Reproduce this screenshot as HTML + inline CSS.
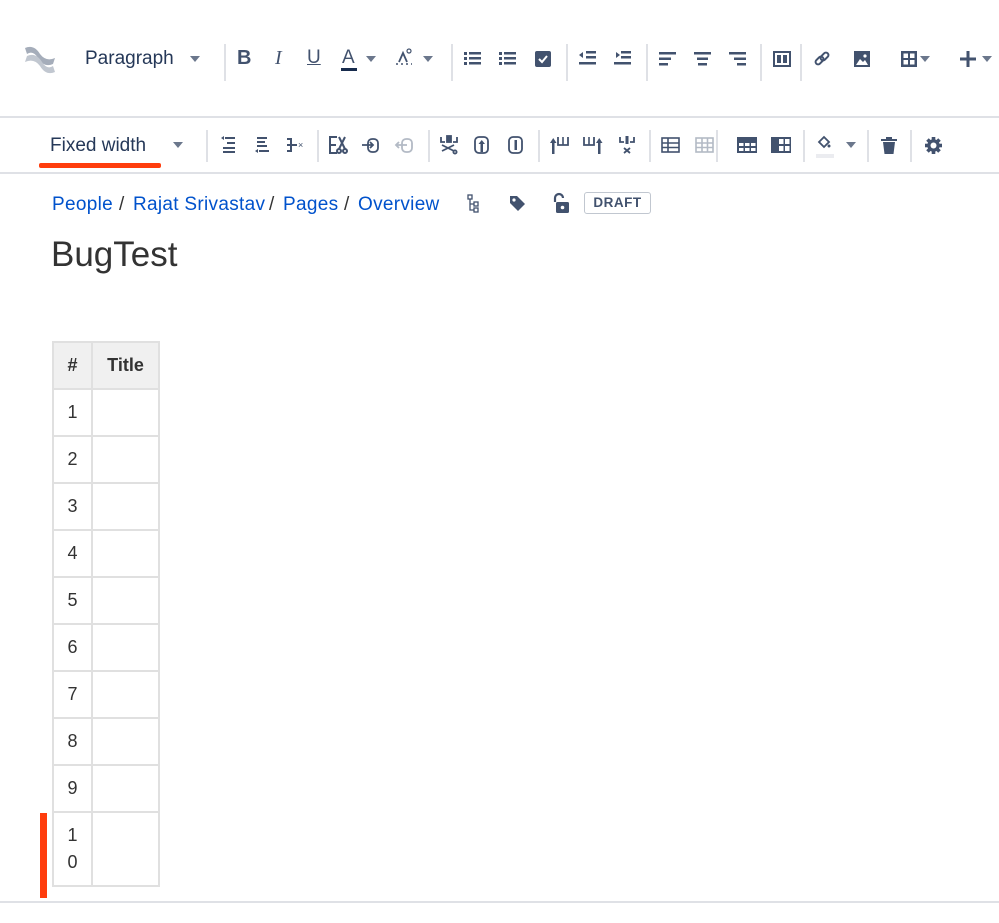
<!DOCTYPE html>
<html><head><meta charset="utf-8"><style>
*{margin:0;padding:0;box-sizing:border-box}
body{width:999px;height:923px;background:#fff;font-family:"Liberation Sans",Arial,sans-serif;position:relative;overflow:hidden;color:#172b4d}
.a{position:absolute}
.sep{position:absolute;width:2px;background:#dfe1e6}
.hl{position:absolute;left:0;width:999px;height:2px;background:#dfe1e6}
svg{position:absolute;overflow:visible}
.caret{position:absolute;width:0;height:0;border-left:5px solid transparent;border-right:5px solid transparent;border-top:6px solid #6b778c}
.bc{position:absolute;top:194px;font-size:19px;color:#0052cc;white-space:nowrap}
.sl{position:absolute;top:194px;font-size:19px;color:#333}
table{position:absolute;left:52px;top:341px;border-collapse:collapse;font-size:18px;color:#333}
td,th{border:2px solid #e0e0e0;text-align:center;vertical-align:middle}
th{background:#f0f0f0;height:47px;font-weight:bold}
td{height:47px}
</style></head><body>
<svg style="left:22px;top:42px" width="36" height="36" viewBox="0 0 36 36"><path d="M3 6 Q12 2 18 12 Q24 20 33 16 L31 22 Q22 26 16 16 Q11 8 5 12Z" fill="#a5adba"/><path d="M33 30 Q24 34 18 24 Q12 16 3 20 L5 14 Q14 10 20 20 Q25 28 31 24Z" fill="#c1c7d0"/></svg>
<div class="a" style="left:85px;top:48px;font-size:19px;color:#253858">Paragraph</div>
<div class="caret" style="left:190px;top:56px"></div>
<div class="sep" style="left:224px;top:44px;height:37px"></div>
<div class="a" style="left:237px;top:47px;font-size:20px;font-weight:bold;color:#42526e">B</div>
<div class="a" style="left:275px;top:47px;font-size:20px;font-style:italic;color:#42526e;font-family:'Liberation Serif'">I</div>
<div class="a" style="left:307px;top:47px;font-size:19px;color:#42526e;text-decoration:underline">U</div>
<div class="a" style="left:342px;top:47px;font-size:19px;color:#42526e">A</div><div class="a" style="left:341px;top:68px;width:16px;height:3px;background:#172b4d"></div>
<div class="caret" style="left:366px;top:56px"></div>
<svg style="left:396px;top:48px" width="18" height="22"><path d="M3 14 L7 5 L11 14" stroke="#42526e" stroke-width="1.8" fill="none"/><circle cx="13" cy="3" r="2" stroke="#42526e" stroke-width="1.2" fill="none"/><path d="M0 16 H16" stroke="#42526e" stroke-width="1.5" stroke-dasharray="2 3"/></svg>
<div class="caret" style="left:423px;top:56px"></div>
<div class="sep" style="left:451px;top:44px;height:37px"></div>
<svg style="left:464px;top:52px" width="18" height="14"><g fill="#42526e"><rect x="0" y="0" width="3" height="3"/><rect x="5" y="0" width="12" height="2.5"/><rect x="0" y="5" width="3" height="3"/><rect x="5" y="5" width="12" height="2.5"/><rect x="0" y="10" width="3" height="3"/><rect x="5" y="10" width="12" height="2.5"/></g></svg>
<svg style="left:499px;top:52px" width="18" height="14"><g fill="#42526e"><rect x="0" y="0" width="3" height="3"/><rect x="5" y="0" width="12" height="2.5"/><rect x="0" y="5" width="3" height="3"/><rect x="5" y="5" width="12" height="2.5"/><rect x="0" y="10" width="3" height="3"/><rect x="5" y="10" width="12" height="2.5"/></g></svg>
<svg style="left:535px;top:51px" width="16" height="16"><rect width="16" height="16" rx="2" fill="#42526e"/><path d="M4 8 L7 11 L12 5" stroke="#fff" stroke-width="2" fill="none"/></svg>
<div class="sep" style="left:566px;top:44px;height:37px"></div>
<svg style="left:579px;top:51px" width="18" height="15"><g fill="#42526e"><rect x="7" y="0" width="10" height="2.5"/><rect x="7" y="5" width="10" height="2.5"/><rect x="0" y="11" width="17" height="2.5"/><path d="M0 4 L4 1 L4 7Z"/></g></svg>
<svg style="left:614px;top:51px" width="18" height="15"><g fill="#42526e"><rect x="7" y="0" width="10" height="2.5"/><rect x="7" y="5" width="10" height="2.5"/><rect x="0" y="11" width="17" height="2.5"/><path d="M6 4 L2 1 L2 7Z"/></g></svg>
<div class="sep" style="left:646px;top:44px;height:37px"></div>
<svg style="left:659px;top:52px" width="17" height="14"><g fill="#42526e"><rect width="17" height="2.5"/><rect y="5.5" width="12" height="2.5"/><rect y="11" width="9" height="2.5"/></g></svg>
<svg style="left:694px;top:52px" width="17" height="14"><g fill="#42526e"><rect width="17" height="2.5"/><rect x="3" y="5.5" width="11" height="2.5"/><rect x="4" y="11" width="9" height="2.5"/></g></svg>
<svg style="left:729px;top:52px" width="17" height="14"><g fill="#42526e"><rect width="17" height="2.5"/><rect x="5" y="5.5" width="12" height="2.5"/><rect x="8" y="11" width="9" height="2.5"/></g></svg>
<div class="sep" style="left:760px;top:44px;height:37px"></div>
<svg style="left:773px;top:51px" width="18" height="16"><rect x="1" y="1" width="16" height="14" fill="none" stroke="#42526e" stroke-width="2"/><rect x="4" y="4" width="4" height="8" fill="#42526e"/><rect x="10" y="4" width="4" height="8" fill="#42526e"/></svg>
<div class="sep" style="left:800px;top:44px;height:37px"></div>
<svg style="left:814px;top:51px" width="16" height="16"><g fill="none" stroke="#42526e" stroke-width="2"><rect x="1" y="7" width="9" height="5" rx="2.5" transform="rotate(-45 5.5 9.5)"/><rect x="6" y="3" width="9" height="5" rx="2.5" transform="rotate(-45 10.5 5.5)"/></g></svg>
<svg style="left:854px;top:51px" width="16" height="16"><rect width="16" height="16" fill="#42526e"/><path d="M2 14 L6 8 L9 11 L11 9 L14 14Z" fill="#fff"/><circle cx="11" cy="5" r="1.6" fill="#fff"/></svg>
<svg style="left:901px;top:51px" width="16" height="16"><rect width="16" height="16" fill="#42526e"/><rect x="2.5" y="2.5" width="4.5" height="4.5" fill="#fff"/><rect x="9" y="2.5" width="4.5" height="4.5" fill="#fff"/><rect x="2.5" y="9" width="4.5" height="4.5" fill="#fff"/><rect x="9" y="9" width="4.5" height="4.5" fill="#fff"/></svg>
<div class="caret" style="left:920px;top:56px"></div>
<svg style="left:960px;top:51px" width="16" height="16"><rect x="6.5" width="3" height="16" fill="#42526e"/><rect y="6.5" width="16" height="3" fill="#42526e"/></svg>
<div class="caret" style="left:982px;top:56px"></div>
<div class="hl" style="top:116px"></div>
<div class="a" style="left:50px;top:135px;font-size:19px;color:#253858">Fixed width</div>
<div class="a" style="left:39px;top:163px;width:122px;height:5px;background:#ff3d0d;border-radius:2px"></div>
<div class="caret" style="left:173px;top:142px"></div>
<div class="sep" style="left:206px;top:130px;height:32px"></div>
<svg style="left:221px;top:137px" width="14" height="16"><g fill="#42526e"><rect x="4" y="0" width="10" height="2"/><rect x="6" y="5" width="8" height="2"/><rect x="2" y="10" width="12" height="2"/><rect x="2" y="14" width="12" height="2"/><path d="M0 1 L3 -1 L3 3Z"/></g></svg>
<svg style="left:255px;top:137px" width="14" height="16"><g fill="#42526e"><rect x="2" y="0" width="10" height="2"/><rect x="2" y="4" width="8" height="2"/><rect x="2" y="8" width="10" height="2"/><rect x="4" y="13" width="10" height="2"/><path d="M0 14 L3 12 L3 16Z"/></g></svg>
<svg style="left:287px;top:138px" width="18" height="14"><g fill="#42526e"><rect x="0" y="0" width="5" height="2"/><rect x="3" y="0" width="2" height="14"/><rect x="0" y="12" width="5" height="2"/><rect x="0" y="6" width="10" height="2"/><text x="11" y="10" font-size="9" fill="#42526e" font-family="Liberation Sans">×</text></g></svg>
<div class="sep" style="left:317px;top:130px;height:32px"></div>
<svg style="left:329px;top:136px" width="18" height="18"><g stroke="#42526e" stroke-width="2" fill="none"><path d="M8 1 H1 V17 H8 M1 9 H7"/><path d="M10 1 L16 13 M16 1 L10 13"/><circle cx="10" cy="15" r="2"/><circle cx="16" cy="15" r="2"/></g></svg>
<svg style="left:362px;top:137px" width="18" height="16"><g stroke="#42526e" stroke-width="1.8" fill="none"><rect x="6" y="2" width="10" height="13" rx="4"/><path d="M0 8 H11 M8 5 L11 8 L8 11"/></g></svg>
<svg style="left:396px;top:137px" width="18" height="16"><g stroke="#b3bac5" stroke-width="1.8" fill="none"><rect x="6" y="2" width="10" height="13" rx="4"/><path d="M0 8 H11 M3 5 L0 8 L3 11"/></g></svg>
<div class="sep" style="left:428px;top:130px;height:32px"></div>
<svg style="left:440px;top:136px" width="18" height="18"><g stroke="#42526e" stroke-width="1.8" fill="none"><path d="M1 1 V6 H5 M13 6 H17 V1"/><rect x="7" y="0" width="4" height="6" fill="#42526e"/><path d="M2 9 L14 15 M2 15 L14 9"/><circle cx="15" cy="16" r="1.6"/></g></svg>
<svg style="left:474px;top:136px" width="16" height="18"><g stroke="#42526e" stroke-width="1.8" fill="none"><rect x="1" y="1" width="13" height="16" rx="4"/></g><rect x="6.5" y="7" width="2.5" height="9" fill="#42526e"/><path d="M4.5 8 L7.75 4 L11 8Z" fill="#42526e"/></svg>
<svg style="left:508px;top:136px" width="16" height="18"><g stroke="#42526e" stroke-width="1.8" fill="none"><rect x="1" y="1" width="13" height="16" rx="4"/></g><rect x="6.5" y="4" width="2.5" height="10" fill="#42526e"/></svg>
<div class="sep" style="left:538px;top:130px;height:32px"></div>
<svg style="left:550px;top:136px" width="20" height="18"><g fill="#42526e"><rect x="2" y="6" width="2.5" height="12"/><path d="M0 7 L3.25 2 L6.5 7Z"/><path d="M8 1 V9 H18 V1" stroke="#42526e" stroke-width="1.8" fill="none"/><rect x="12.2" y="1" width="1.6" height="8"/></g></svg>
<svg style="left:583px;top:136px" width="20" height="18"><g fill="#42526e"><path d="M1 1 V9 H11 V1" stroke="#42526e" stroke-width="1.8" fill="none"/><rect x="5.2" y="1" width="1.6" height="8"/><rect x="15" y="6" width="2.5" height="12"/><path d="M13 7 L16.25 2 L19.5 7Z"/></g></svg>
<svg style="left:619px;top:136px" width="16" height="18"><g stroke="#42526e" stroke-width="1.8" fill="none"><path d="M1 1 V6 H5 M11 6 H15 V1 M5 12 L11 17 M11 12 L5 17"/></g><rect x="6.5" y="0" width="3" height="8" fill="#42526e"/></svg>
<div class="sep" style="left:649px;top:130px;height:32px"></div>
<svg style="left:661px;top:137px" width="19" height="16"><g stroke="#42526e" stroke-width="1.6" fill="none"><rect x="1" y="1" width="17" height="14"/><path d="M1 6 H18 M1 10.5 H18 M7 1 V15"/></g></svg>
<svg style="left:695px;top:137px" width="19" height="16"><g stroke="#b3bac5" stroke-width="1.6" fill="none"><rect x="1" y="1" width="17" height="14"/><path d="M1 6 H18 M1 10.5 H18 M7 1 V15 M12.5 1 V15"/></g></svg>
<div class="sep" style="left:716px;top:130px;height:32px"></div>
<svg style="left:737px;top:137px" width="20" height="16"><rect width="20" height="16" fill="#42526e"/><g fill="#fff"><rect x="2" y="6" width="4.5" height="3"/><rect x="8" y="6" width="4.5" height="3"/><rect x="14" y="6" width="4.5" height="3"/><rect x="2" y="11" width="4.5" height="3"/><rect x="8" y="11" width="4.5" height="3"/><rect x="14" y="11" width="4.5" height="3"/></g></svg>
<svg style="left:771px;top:137px" width="20" height="16"><rect width="20" height="16" fill="#42526e"/><g fill="#fff"><rect x="8" y="2" width="4.5" height="5"/><rect x="14" y="2" width="4.5" height="5"/><rect x="8" y="9" width="4.5" height="5"/><rect x="14" y="9" width="4.5" height="5"/></g></svg>
<div class="sep" style="left:803px;top:130px;height:32px"></div>
<svg style="left:816px;top:136px" width="18" height="22"><path d="M3 6 L8 1 L13 6 L8 11Z" stroke="#42526e" stroke-width="1.8" fill="none"/><circle cx="13" cy="10" r="1.5" fill="#42526e"/><rect x="0" y="18" width="18" height="4" fill="#ebecf0"/></svg>
<div class="caret" style="left:846px;top:142px"></div>
<div class="sep" style="left:867px;top:130px;height:32px"></div>
<svg style="left:881px;top:137px" width="16" height="17"><path d="M0 2 H16 V4 H0Z M5 0 H11 V2 H5Z M2 5 H14 L12.5 17 H3.5Z" fill="#42526e"/></svg>
<div class="sep" style="left:910px;top:130px;height:32px"></div>
<svg style="left:925px;top:137px" width="17" height="17" viewBox="-8.5 -8.5 17 17"><g fill="#42526e"><circle r="6.2"/><rect x="-1.8" y="-8.5" width="3.6" height="17"/><rect x="-1.8" y="-8.5" width="3.6" height="17" transform="rotate(45)"/><rect x="-1.8" y="-8.5" width="3.6" height="17" transform="rotate(90)"/><rect x="-1.8" y="-8.5" width="3.6" height="17" transform="rotate(135)"/></g><circle r="3" fill="#fff"/></svg>
<div class="hl" style="top:172px"></div>
<div class="bc" style="left:52px;letter-spacing:0.3px">People</div>
<div class="sl" style="left:119px">/</div>
<div class="bc" style="left:133px;letter-spacing:0.3px">Rajat Srivastav</div>
<div class="sl" style="left:269px">/</div>
<div class="bc" style="left:283px;letter-spacing:0.3px">Pages</div>
<div class="sl" style="left:344px">/</div>
<div class="bc" style="left:358px;letter-spacing:0.3px">Overview</div>
<svg style="left:467px;top:194px" width="14" height="20"><g stroke="#42526e" stroke-width="1.3" fill="none"><rect x="1" y="1" width="4" height="4"/><rect x="7" y="8" width="4" height="4"/><rect x="7" y="14" width="4" height="4"/><path d="M3 5 V16 H7 M3 10 H7"/></g></svg>
<svg style="left:508px;top:195px" width="18" height="18"><path d="M2 1 H9 L17 9 L10 16 L2 8Z" fill="#42526e"/><circle cx="6" cy="5" r="1.6" fill="#fff"/></svg>
<svg style="left:551px;top:193px" width="18" height="21"><path d="M4 9 V5 A4 4 0 0 1 12 5" stroke="#42526e" stroke-width="2.2" fill="none"/><rect x="5" y="9" width="13" height="11" rx="1.5" fill="#42526e"/><circle cx="11.5" cy="14.5" r="1.8" fill="#fff"/></svg>
<div class="a" style="left:584px;top:192px;width:67px;height:22px;border:1.5px solid #c1c7d0;border-radius:3px;font-size:13.5px;font-weight:bold;color:#42526e;text-align:center;line-height:19px;letter-spacing:.5px">DRAFT</div>
<div class="a" style="left:51px;top:235px;font-size:35px;color:#333">BugTest</div>
<table>
<tr><th style="width:39px">#</th><th style="width:67px">Title</th></tr>
<tr><td>1</td><td></td></tr><tr><td>2</td><td></td></tr><tr><td>3</td><td></td></tr><tr><td>4</td><td></td></tr><tr><td>5</td><td></td></tr><tr><td>6</td><td></td></tr><tr><td>7</td><td></td></tr><tr><td>8</td><td></td></tr><tr><td>9</td><td></td></tr>
<tr><td style="height:74px;line-height:27px">1<br>0</td><td></td></tr>
</table>
<div class="a" style="left:40px;top:813px;width:7px;height:85px;background:#ff3d0d"></div>
<div class="hl" style="top:901px"></div>
</body></html>
